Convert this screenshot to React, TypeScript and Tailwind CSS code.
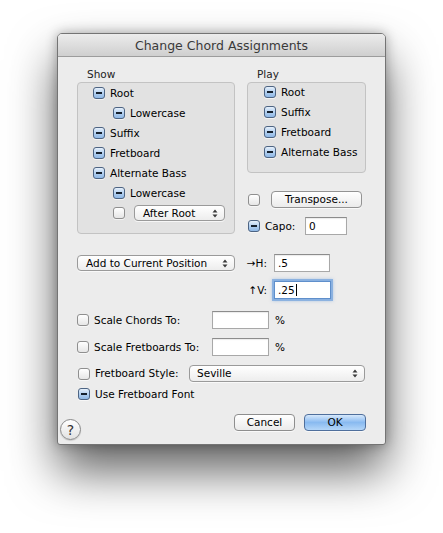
import React from "react";

type CheckState = "mixed" | "off";

function Check({ state }: { state: CheckState }) {
    if (state === "mixed") {
        return (
            <span className="flex h-[12px] w-[12px] shrink-0 items-center justify-center rounded-[3px] border border-[#4d6483] bg-gradient-to-b from-[#e6f0fb] via-[#b3d0f0] to-[#8fb8e6] shadow-[0_1px_0_rgba(255,255,255,0.6)]">
                <span className="h-[2px] w-[6px] bg-[#15202e]" />
            </span>
        );
    }
    return (
        <span className="block h-[12px] w-[12px] shrink-0 rounded-[3px] border border-[#8f8f8f] bg-gradient-to-b from-[#ffffff] to-[#e6e6e6] shadow-[0_1px_0_rgba(255,255,255,0.6)]" />
    );
}

function PopupArrows() {
    return (
        <svg width="6" height="9" viewBox="0 0 6 9" className="shrink-0">
            <path d="M3 0.5 L5.5 3.5 H0.5 Z M3 8.5 L5.5 5.5 H0.5 Z" fill="#3a3a3a" />
        </svg>
    );
}

function Popup({ label, className }: { label: string; className: string }) {
    return (
        <div className={"flex shrink-0 items-center justify-between rounded-[4px] border border-[#9a9a9a] bg-gradient-to-b from-[#ffffff] to-[#ededed] pr-[6px] shadow-[0_1px_0_rgba(255,255,255,0.7)] " + className}>
            <span className="leading-none text-black">{label}</span>
            <PopupArrows />
        </div>
    );
}

function Field({ value, className, focused }: { value?: string; className: string; focused?: boolean }) {
    return (
        <div
            className={
                "flex shrink-0 items-center bg-white pl-[3px] leading-none text-black " +
                (focused
                    ? "border border-[#5f8fcb] shadow-[0_0_0_2px_rgba(120,165,222,0.75),0_0_3px_2px_rgba(120,165,222,0.5)] "
                    : "border border-[#a8a8a8] border-t-[#8c8c8c] shadow-[inset_0_1px_1px_rgba(0,0,0,0.08)] ") +
                className
            }
        >
            {value}
            {focused && <span className="ml-[1px] h-[12px] w-px bg-black" />}
        </div>
    );
}

function Row({ state, label, indent }: { state: CheckState; label: string; indent: string }) {
    return (
        <div className={"flex h-[20px] items-center " + indent}>
            <Check state={state} />
            <span className="ml-[5px] leading-none text-black">{label}</span>
        </div>
    );
}

export default function App() {
    return (
        <div className="min-h-screen bg-white pl-[57px] pt-[33px] font-['DejaVu_Sans',sans-serif] text-[10.5px]">
            <div className="w-[329px] rounded-b-[3px] rounded-t-[5px] border border-[#747474] bg-[#ececec] shadow-[0_26px_48px_rgba(0,0,0,0.62),0_0_12px_rgba(0,0,0,0.3)]">
                <div className="h-[23px] rounded-t-[4px] border-b border-[#9c9c9c] bg-gradient-to-b from-[#ececec] to-[#cfcfcf] text-center text-[12.5px] leading-[23px] text-[#3a3a3a]">
                    Change Chord Assignments
                </div>

                <div className="pb-[3px] pl-[19px] pr-[19px] pt-[10px]">
                    <div className="flex gap-[12px]">
                        <div className="w-[158px]">
                            <div className="mb-[2px] h-[13px] pl-[10px] leading-[14px] text-[#222]">Show</div>
                            <div className="h-[152px] rounded-[4px] border border-[#c3c3c3] bg-[#e2e2e2]">
                                <Row state="mixed" label="Root" indent="pl-[15px]" />
                                <Row state="mixed" label="Lowercase" indent="pl-[35px]" />
                                <Row state="mixed" label="Suffix" indent="pl-[15px]" />
                                <Row state="mixed" label="Fretboard" indent="pl-[15px]" />
                                <Row state="mixed" label="Alternate Bass" indent="pl-[15px]" />
                                <Row state="mixed" label="Lowercase" indent="pl-[35px]" />
                                <div className="flex h-[20px] items-center pl-[35px]">
                                    <Check state="off" />
                                    <Popup label="After Root" className="ml-[9px] h-[16px] w-[91px] pl-[8px]" />
                                </div>
                            </div>
                        </div>

                        <div className="w-[119px]">
                            <div className="mb-[2px] h-[13px] pl-[10px] leading-[14px] text-[#222]">Play</div>
                            <div className="h-[91px] rounded-[4px] border border-[#c3c3c3] bg-[#e2e2e2]">
                                <div className="-mt-px">
                                    <Row state="mixed" label="Root" indent="pl-[16px]" />
                                    <Row state="mixed" label="Suffix" indent="pl-[16px]" />
                                    <Row state="mixed" label="Fretboard" indent="pl-[16px]" />
                                    <Row state="mixed" label="Alternate Bass" indent="pl-[16px]" />
                                </div>
                            </div>
                            <div className="mt-[17px] flex h-[19px] items-center pl-[1px]">
                                <Check state="off" />
                                <div className="ml-[11px] flex h-[17px] w-[91px] items-center justify-center rounded-[4px] border border-[#939393] bg-gradient-to-b from-[#ffffff] to-[#ebebeb] leading-none text-black shadow-[0_1px_0_rgba(255,255,255,0.7)]">
                                    Transpose...
                                </div>
                            </div>
                            <div className="mt-[8px] flex h-[18px] items-center pl-[1px]">
                                <Check state="mixed" />
                                <span className="ml-[5px] w-[40px] leading-none text-black">Capo:</span>
                                <Field value="0" className="h-[18px] w-[42px]" />
                            </div>
                        </div>
                    </div>

                    <div className="mt-[19px] flex h-[18px] items-center">
                        <Popup label="Add to Current Position" className="h-[16px] w-[158px] pl-[8px]" />
                        <span className="ml-[10px] w-[22px] text-right leading-none text-black">→H:</span>
                        <Field value=".5" className="ml-[7px] h-[18px] w-[56px]" />
                    </div>
                    <div className="mt-[9px] flex h-[18px] items-center">
                        <span className="w-[158px]" />
                        <span className="ml-[10px] w-[22px] text-right leading-none text-black">↑V:</span>
                        <Field value=".25" focused className="ml-[7px] h-[18px] w-[57px]" />
                    </div>

                    <div className="mt-[12px] flex h-[18px] items-center">
                        <Check state="off" />
                        <span className="ml-[5px] w-[118px] leading-none text-black">Scale Chords To:</span>
                        <Field className="h-[18px] w-[57px]" />
                        <span className="ml-[6px] leading-none text-black">%</span>
                    </div>
                    <div className="mt-[9px] flex h-[18px] items-center">
                        <Check state="off" />
                        <span className="ml-[5px] w-[118px] leading-none text-black">Scale Fretboards To:</span>
                        <Field className="h-[18px] w-[57px]" />
                        <span className="ml-[6px] leading-none text-black">%</span>
                    </div>
                    <div className="mt-[9px] flex h-[17px] items-center pl-[1px]">
                        <Check state="off" />
                        <span className="ml-[5px] w-[94px] leading-none text-black">Fretboard Style:</span>
                        <Popup label="Seville" className="h-[17px] w-[176px] pl-[7px]" />
                    </div>
                    <div className="mt-[4px] flex h-[16px] items-center pl-[1px]">
                        <Check state="mixed" />
                        <span className="ml-[5px] leading-none text-black">Use Fretboard Font</span>
                    </div>

                    <div className="mt-[12px] flex h-[27px] items-start">
                        <div className="-ml-[17px] mt-[5px] flex h-[21px] w-[21px] items-center justify-center rounded-full border border-[#8a8a8a] bg-gradient-to-b from-[#ffffff] to-[#e2e2e2] text-[14px] leading-none text-[#333] shadow-[0_1px_1px_rgba(0,0,0,0.15)]">
                            ?
                        </div>
                        <div className="ml-auto flex h-[17px] w-[61px] items-center justify-center rounded-[4px] border border-[#8e8e8e] bg-gradient-to-b from-[#ffffff] to-[#ebebeb] leading-none text-black shadow-[0_1px_0_rgba(255,255,255,0.7)]">
                            Cancel
                        </div>
                        <div className="ml-[9px] flex h-[17px] w-[62px] items-center justify-center rounded-[4px] border border-[#4f6f9c] bg-gradient-to-b from-[#d6e8fb] via-[#89baf0] to-[#b4d6f8] leading-none text-black shadow-[0_1px_0_rgba(255,255,255,0.6)]">
                            OK
                        </div>
                    </div>
                </div>
            </div>
        </div>
    );
}
